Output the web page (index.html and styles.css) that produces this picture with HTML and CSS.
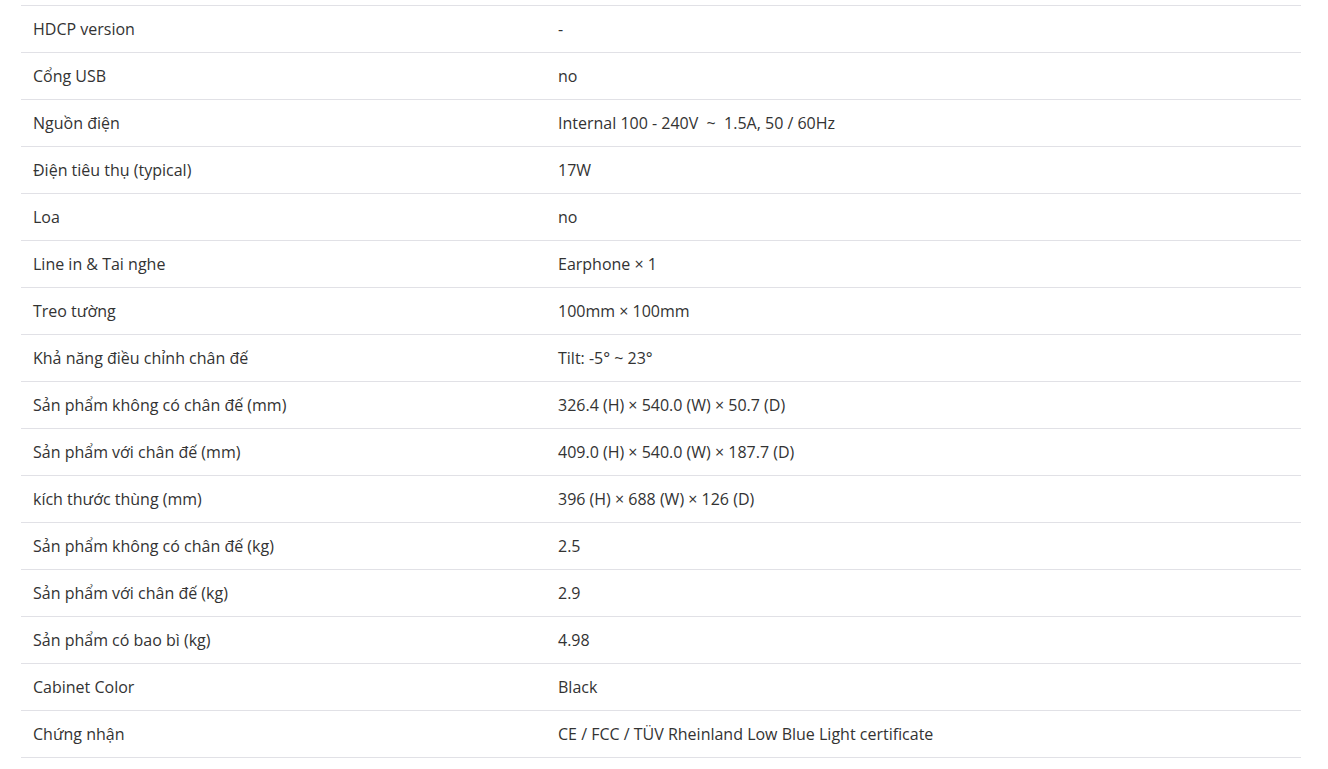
FILE: index.html
```html
<!DOCTYPE html>
<html lang="vi">
<head>
<meta charset="utf-8">
<link rel="stylesheet" href="styles.css">
</head>
<body>
<div class="specs">
  <div class="row"><div class="k">HDCP version</div><div class="v">-</div></div>
  <div class="row"><div class="k">Cổng USB</div><div class="v">no</div></div>
  <div class="row"><div class="k">Nguồn điện</div><div class="v">Internal 100 - 240V &nbsp;~ &nbsp;1.5A, 50 / 60Hz</div></div>
  <div class="row"><div class="k">Điện tiêu thụ (typical)</div><div class="v">17W</div></div>
  <div class="row"><div class="k">Loa</div><div class="v">no</div></div>
  <div class="row"><div class="k">Line in &amp; Tai nghe</div><div class="v">Earphone × 1</div></div>
  <div class="row"><div class="k">Treo tường</div><div class="v">100mm × 100mm</div></div>
  <div class="row"><div class="k">Khả năng điều chỉnh chân đế</div><div class="v">Tilt: -5° ~ 23°</div></div>
  <div class="row"><div class="k">Sản phẩm không có chân đế (mm)</div><div class="v">326.4 (H) × 540.0 (W) × 50.7 (D)</div></div>
  <div class="row"><div class="k">Sản phẩm với chân đế (mm)</div><div class="v">409.0 (H) × 540.0 (W) × 187.7 (D)</div></div>
  <div class="row"><div class="k">kích thước thùng (mm)</div><div class="v">396 (H) × 688 (W) × 126 (D)</div></div>
  <div class="row"><div class="k">Sản phẩm không có chân đế (kg)</div><div class="v">2.5</div></div>
  <div class="row"><div class="k">Sản phẩm với chân đế (kg)</div><div class="v">2.9</div></div>
  <div class="row"><div class="k">Sản phẩm có bao bì (kg)</div><div class="v">4.98</div></div>
  <div class="row"><div class="k">Cabinet Color</div><div class="v">Black</div></div>
  <div class="row"><div class="k">Chứng nhận</div><div class="v">CE / FCC / TÜV Rheinland Low Blue Light certificate</div></div>
</div>
</body>
</html>
```
FILE: styles.css
```css
html, body {
  margin: 0;
  padding: 0;
  background: #fff;
}
body {
  font-family: "Open Sans", "Noto Sans", sans-serif;
  font-size: 16px;
  color: #333;
  padding: 5px 0 0 21px;
}
.specs {
  width: 1280px;
  border-top: 1px solid #e1e1e6;
}
.row {
  display: grid;
  grid-template-columns: 525px 1fr;
  border-bottom: 1px solid #e1e1e6;
}
.k, .v {
  padding: 11px 12px;
  line-height: 24px;
}
```
